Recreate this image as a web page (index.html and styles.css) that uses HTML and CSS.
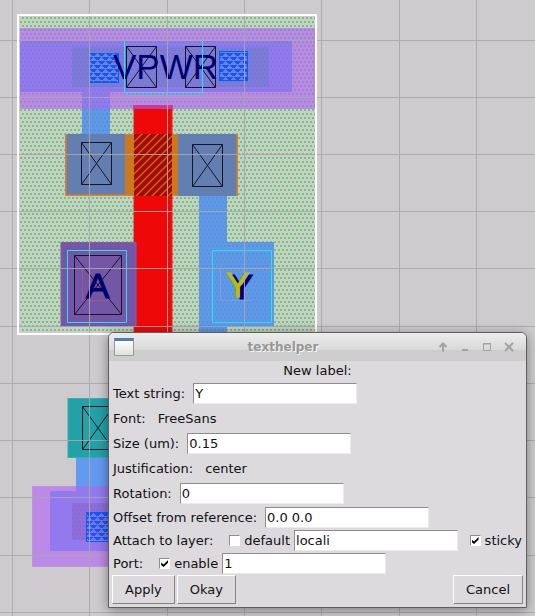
FILE: index.html
```html
<!DOCTYPE html>
<html lang="en">
<head>
<meta charset="utf-8">
<title>texthelper</title>
<link rel="stylesheet" href="styles.css">
</head>
<body>
<main class="workspace">
  <svg class="layout" role="img" aria-label="Cell layout">
    <defs>
      <pattern id="well" width="4" height="8" patternUnits="userSpaceOnUse">
        <path d="M2 1h2v2h-2zM0 5h2v2h-2z" fill="#5bd460"/>
      </pattern>
      <pattern id="shade" width="4" height="8" patternUnits="userSpaceOnUse">
        <path d="M2 1h2v2h-2zM0 5h2v2h-2z" fill="#46908f" fill-opacity=".36"/>
      </pattern>
      <pattern id="faint" width="4" height="8" patternUnits="userSpaceOnUse">
        <path d="M2 1h2v2h-2zM0 5h2v2h-2z" fill="#5c70b0" fill-opacity=".25"/>
      </pattern>
      <pattern id="via" width="8" height="8" patternUnits="userSpaceOnUse" x="2" y="5">
        <path d="M0 0h7v1h-1v1h-1v1h-3v-1h-1v-1h-1zM4 4h4v1h-4zM0 4h3v1h-3zM5 5h3v1h-3zM0 5h2v1h-2zM6 6h2v1h-2zM0 6h1v1h-1z" fill="#0060ff"/>
      </pattern>
      <pattern id="grid-top" width="464" height="572" patternUnits="userSpaceOnUse" x="12" y="40">
        <path d="M.5 0v572M77.500 0v572M155.500 0v572M232.500 0v572M309.500 0v572M387.500 0v572M0 .5h464M0 57.500h464M0 114.500h464M0 171.500h464M0 228.500h464M0 286.500h464M0 343.500h464M0 400.500h464M0 457.500h464M0 515.500h464" stroke="#a9a7aa"/>
      </pattern>
      <pattern id="gate" width="8" height="8" patternUnits="userSpaceOnUse" x="134" y="134">
        <path d="M-2 10L10-2M-2 2L2-2M6 10l4-4" stroke="#c5701c" stroke-width="1.3"/>
      </pattern>
    </defs>

    <rect x="18" y="15" width="298" height="319" fill="#cdcbce"/>
    <rect x="20" y="17" width="295" height="316" fill="url(#well)"/>

    <path d="M82 108h28v28h-28zM199 194h28v48h47v84h-47v8h-28z" fill="#6098ee"/>
    <path d="M82 109h28v25h-28zM199 196h28v46h47v84h-47v8h-28z" fill="url(#shade)"/>
    <rect x="20" y="28" width="295" height="81" fill="#bc8ae6"/>
    <rect x="20" y="28" width="295" height="81" fill="url(#shade)"/>
    <path d="M20 40h272v52h-182v17h-28v-17h-62z" fill="#9379ee"/>
    <path d="M20 40h272v52h-182v17h-28v-17h-62z" fill="url(#faint)"/>
    <rect x="72" y="47" width="197" height="40" fill="#7d7bd8"/>
    <rect x="72" y="47" width="197" height="40" fill="url(#faint)"/>
    <rect x="90" y="53" width="29" height="30" fill="url(#via)"/>
    <path d="M90 82.500h28.500v-28.500" fill="none" stroke="#0060ff"/>
    <rect x="219.500" y="51.500" width="28" height="29" fill="url(#via)" stroke="#0060ff"/>

    <rect x="134" y="106" width="38" height="228" fill="#ee0808" stroke="#df2020"/>
    <rect x="133" y="105" width="40" height="4" fill="#c33c9b"/>

    <rect x="65.500" y="134.500" width="172" height="61" fill="#cb781f" stroke="#bd875a"/>
    <path d="M67 134h58v60h-58zM178 134h58v62h-58z" fill="#637eb0"/>
    <rect x="134" y="134" width="38" height="62" fill="#a70809"/>
    <rect x="134" y="134" width="38" height="62" fill="url(#gate)"/>

    <rect x="61" y="242.500" width="75" height="84" fill="#7456a6" stroke="#8260a4"/>
    <path d="M82.500 269v31.500h28" fill="none" stroke="#9e598b"/>
    <path d="M220.500 268v32.500h30" fill="none" stroke="#799fd8"/>

    <g class="contact">
      <path d="M126.500 46.500h30v41h-30zl30 41m0-41l-30 41"/>
      <path d="M185.500 46.500h30v41h-30zl30 41m0-41l-30 41"/>
      <path d="M81.500 142.500h30v42h-30zl30 42m0-42l-30 42"/>
      <path d="M192.500 144.500h30v42h-30zl30 42m0-42l-30 42"/>
      <path d="M74.500 255.500h47v59h-47zl47 59m0-59l-47 59"/>
    </g>

    <rect x="68" y="398.500" width="70" height="59" fill="#22a1a6" stroke="#35aeae"/>
    <path class="contact" d="M82.500 406.500h31v43h-31zl31 43m0-43l-31 43"/>
    <rect x="76" y="458" width="50" height="30" fill="#6499f0"/>
    <rect x="32.500" y="486.500" width="100" height="80" fill="#bc8ae6" stroke="#bd93df"/>
    <path d="M50 491h26v-5h60v65h-86z" fill="#9379ee"/>
    <rect x="72" y="503" width="50" height="37" fill="#906ddb"/>
    <rect x="72" y="503" width="50" height="37" fill="url(#faint)"/>
    <rect x="86.500" y="512.500" width="40" height="29" fill="url(#via)" stroke="#0060ff"/>

    <g class="label">
      <text x="113" y="79">VPWR</text>
      <text class="heavy" x="86" y="298">A</text>
      <text class="heavy" x="230" y="299">Y</text>
      <text class="heavy selected" x="226" y="297">Y</text>
    </g>
    <g class="port">
      <path d="M124.500 40.500h78v52h-78z"/>
      <path d="M67.500 250.500h59v72h-59z"/>
      <path d="M212.500 250.500h59v72h-59z"/>
    </g>
    <rect width="100%" height="100%" fill="url(#grid-top)" opacity=".9"/>
    <rect x="18" y="15" width="298" height="319" fill="none" stroke="#fff" stroke-width="2"/>
  </svg>

  <form class="dialog" aria-labelledby="window-title">
    <header class="titlebar">
      <span class="app-icon"></span>
      <h1 id="window-title" class="title">texthelper</h1>
      <div class="window-controls">
        <button type="button" aria-label="Shade"><svg viewBox="0 0 10 10"><path d="M5 9.500V2M1.500 5L5 1.500 8.500 5" stroke-width="2"/></svg></button>
        <button type="button" aria-label="Minimize"><svg viewBox="0 0 10 10"><path d="M2 8h6" stroke-width="2"/></svg></button>
        <button type="button" aria-label="Maximize"><svg viewBox="0 0 10 10"><path d="M1.500 1v7.500h7V1M1 2h8" /><path d="M1 1.500h8" stroke-width="1"/></svg></button>
        <button type="button" aria-label="Close"><svg viewBox="0 0 10 10"><path d="M1 1l8 8M9 1l-8 8" stroke-width="2"/></svg></button>
      </div>
    </header>
    <div class="content">
      <h2 class="heading">New label:</h2>
      <div class="row"><label for="text">Text string:</label><input id="text" class="entry" type="text" value="Y"></div>
      <div class="row wide"><span>Font:</span><span>FreeSans</span></div>
      <div class="row"><label for="size">Size (um):</label><input id="size" class="entry" type="text" value="0.15"></div>
      <div class="row wide"><span>Justification:</span><span>center</span></div>
      <div class="row"><label for="rotation">Rotation:</label><input id="rotation" class="entry" type="text" value="0"></div>
      <div class="row tight"><label for="offset">Offset from reference:</label><input id="offset" class="entry" type="text" value="0.0 0.0"></div>
      <div class="row tight">
        <label for="layer">Attach to layer:</label>
        <div class="options">
          <label class="check"><input type="checkbox">default</label>
          <input id="layer" class="entry" type="text" value="locali">
        </div>
        <label class="check end"><input type="checkbox" checked>sticky</label>
      </div>
      <div class="row tight">
        <label for="port">Port:</label>
        <div class="options">
          <label class="check"><input type="checkbox" checked>enable</label>
          <input id="port" class="entry" type="text" value="1">
        </div>
      </div>
      <div class="actions">
        <button type="submit">Apply</button>
        <button type="button">Okay</button>
        <button type="button" class="cancel">Cancel</button>
      </div>
    </div>
  </form>
</main>
</body>
</html>
```
FILE: styles.css
```css
* { box-sizing: border-box; }

body {
  margin: 0;
  background: #cdcbce;
  color: #111;
  font: 13px/20px "DejaVu Sans", sans-serif;
}

.workspace {
  position: relative;
  min-height: 100vh;
  overflow: hidden;
  padding: 332px 8px 8px 108px;
}

.layout {
  position: absolute;
  inset: 0;
  width: 100%;
  height: 100%;
}

.contact { fill: none; stroke: #15152a; stroke-width: 1; }
.port { fill: none; stroke: #20e4ee; }
.label { fill: #00006e; font: 35px "Liberation Sans", sans-serif; }
.heavy { stroke: #00006e; stroke-width: 1; }
.selected { fill: #bfbd0c; stroke: #bfbd0c; }

.dialog {
  position: relative;
  border: 1px solid #5e5e5c;
  border-radius: 6px 6px 0 0;
  background: #dcdadd;
  box-shadow: 0 2px 12px rgba(0, 0, 0, 0.4);
}

.titlebar {
  display: flex;
  align-items: center;
  height: 28px;
  padding: 0 6px 0 5px;
  border-radius: 5px 5px 0 0;
  background: linear-gradient(#ececec, #d9d9d9 60%, #cdcdcd 61%, #cecece);
}

.app-icon {
  width: 20px;
  height: 18px;
  border: 1px solid #9b9b96;
  border-top: 3px solid #4f7cb5;
  background: linear-gradient(#fff, #dfe1db);
}

.title {
  flex: 1;
  margin: 0;
  color: #979797;
  font: bold 12px/20px "DejaVu Sans", sans-serif;
  text-align: center;
  text-shadow: 1px 1px #f5f5f5;
}

.window-controls { display: flex; }

.window-controls button {
  display: flex;
  align-items: center;
  justify-content: center;
  width: 22px;
  height: 22px;
  padding: 0;
  border: 0;
  background: none;
}

.window-controls svg {
  width: 10px;
  height: 10px;
  fill: none;
  stroke: #a2a2a2;
}

.content { padding: 0 3px 3px; }

.heading {
  margin: 0;
  font-size: 13px;
  font-weight: normal;
  line-height: 20px;
  text-align: center;
}

.row {
  display: flex;
  align-items: center;
  gap: 8px;
  height: 25px;
  padding-left: 1px;
}

.row.wide { gap: 12px; }
.row.tight { height: 23px; }

.entry {
  width: 164px;
  height: 21px;
  padding: 0 1px;
  border: 1px solid;
  border-color: #8e8c8f #eceaed #eceaed #8e8c8f;
  background: #fff;
  color: inherit;
  font: inherit;
}

.options {
  display: flex;
  align-items: center;
  gap: 4px;
  padding-left: 8px;
}

.check {
  display: flex;
  align-items: center;
  gap: 4px;
}

.end { margin-left: auto; padding-right: 1px; }

.check input {
  appearance: none;
  display: grid;
  place-items: center;
  width: 11px;
  height: 11px;
  margin: 0;
  border: 1px solid;
  border-color: #8e8c8f #fff #fff #8e8c8f;
  background: #fff;
}

.check input:checked::before {
  content: "";
  width: 7px;
  height: 7px;
  background: #000;
  clip-path: polygon(0 35%, 35% 65%, 100% 0, 100% 35%, 35% 100%, 0 70%);
}

.actions {
  display: flex;
  gap: 2px;
}

.actions button {
  height: 29px;
  padding: 0 12px;
  border: 1px solid;
  border-color: #fff #858386 #858386 #fff;
  background: #dcdadd;
  color: inherit;
  font: inherit;
}

.actions .cancel { margin-left: auto; }
```
